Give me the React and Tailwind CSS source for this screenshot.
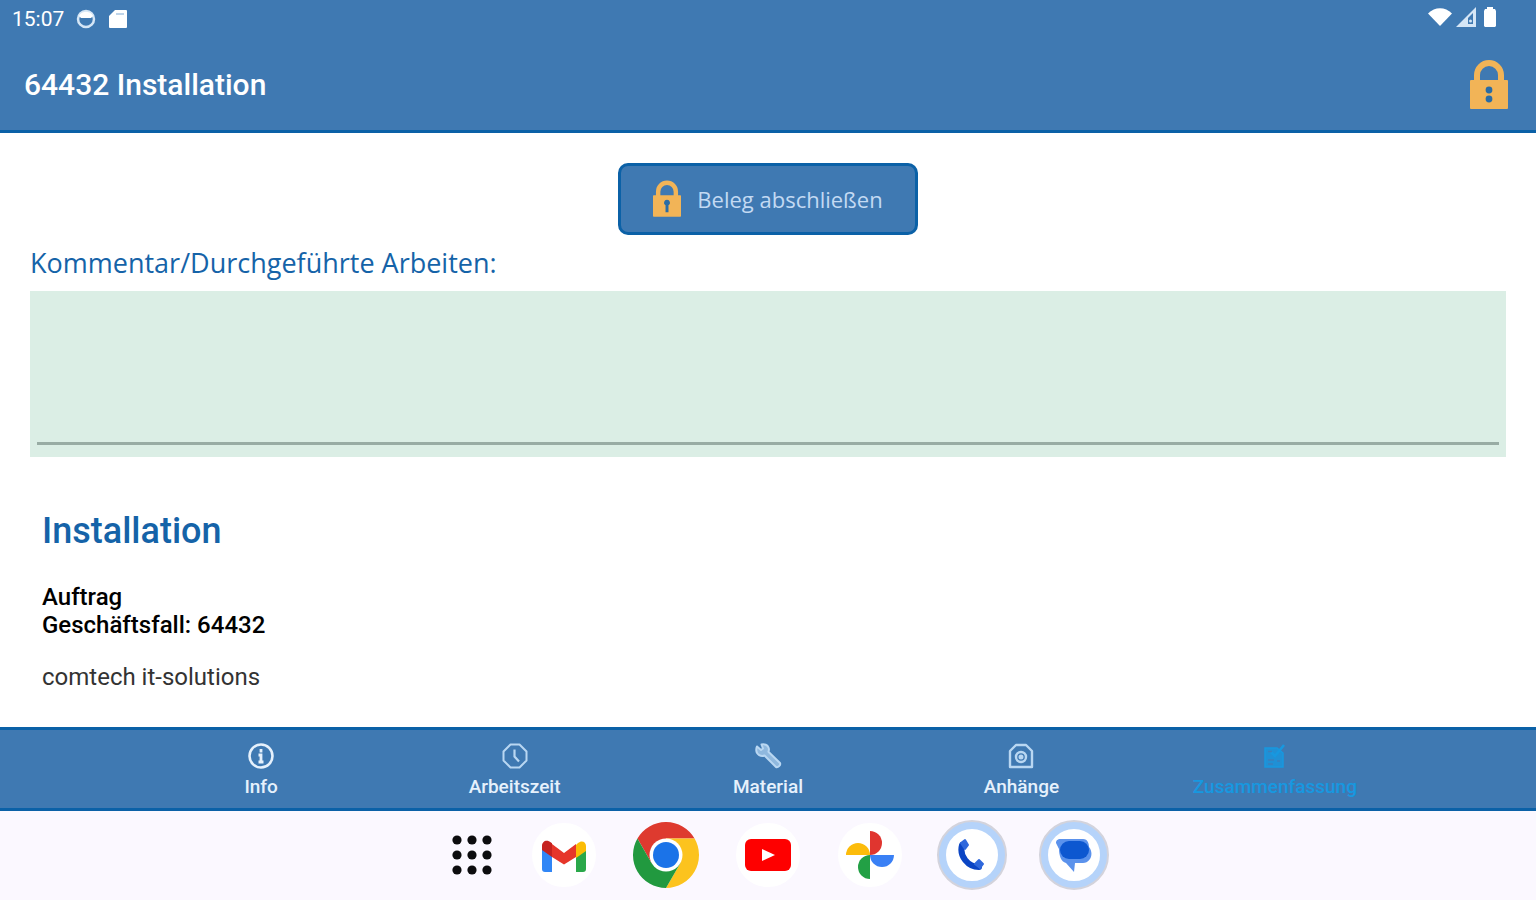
const LockIcon = ({ className, keyhole = 'dots' }) => (
  <svg viewBox="0 0 38 50" className={className} aria-hidden="true">
    <path d="M7 24V15a12 12 0 0 1 24 0v9" fill="none" stroke="#f2b457" strokeWidth="6" />
    <rect x="0" y="20" width="38" height="29" rx="1" fill="#f2b457" />
    {keyhole === 'dots' ? (
      <g fill="#2a6ca5">
        <circle cx="19" cy="30" r="3.4" />
        <circle cx="19" cy="39" r="3.4" />
      </g>
    ) : (
      <path d="M19 26a4 4 0 0 1 2 7.500V43h-4v-9.500A4 4 0 0 1 19 26z" fill="#2a6ca5" />
    )}
  </svg>
);

const InfoIcon = () => (
  <svg viewBox="0 0 28 28" className="h-7 w-7" fill="none" stroke="#e6f1fc" aria-hidden="true">
    <circle cx="14" cy="14" r="11.500" strokeWidth="2.600" />
    <path d="M14 7v3.500M11.500 13H14v7M11.500 20h5" strokeWidth="2.800" />
  </svg>
);

const ClockIcon = () => (
  <svg viewBox="0 0 28 28" className="h-7 w-7" fill="none" stroke="#b9d7f2" aria-hidden="true">
    <path d="M9.500 2.500h9l7 7v9l-7 7h-9l-7-7v-9z" strokeWidth="2" strokeLinejoin="round" />
    <path d="M13.500 7.500v7l4.500 5" strokeWidth="2.200" />
  </svg>
);

const WrenchIcon = () => (
  <svg viewBox="0 0 28 28" className="h-7 w-7" fill="none" stroke="#b9d7f2" aria-hidden="true">
    <path d="M3 4.500L7 8l2-1.500L7.500 2.500c3-.8 6 .5 7 3 .6 1.500.5 3-.1 4.300L26 21c1 2-2 5-4 4L10.500 13.500C7 15 2.500 12.500 2.300 8.500 2.200 7 2.400 5.700 3 4.500z" strokeWidth="2" fill="#8fb8de" strokeLinejoin="round" />
  </svg>
);

const CameraIcon = () => (
  <svg viewBox="0 0 28 28" className="h-7 w-7" fill="none" stroke="#b9d7f2" strokeWidth="2.400" aria-hidden="true">
    <path d="M3 25V9l6-6h10l6 6v16z" strokeLinejoin="round" />
    <circle cx="14" cy="15" r="5" />
    <circle cx="14" cy="15" r="1.300" />
  </svg>
);

const SummaryIcon = () => (
  <svg viewBox="0 0 28 28" className="h-7 w-7" fill="none" stroke="#1798e0" aria-hidden="true">
    <path d="M4 6h12l6 5v14H4z" fill="#1798e0" fillOpacity=".75" strokeWidth="1.500" />
    <path d="M10 10l4 4L23 3" strokeWidth="2.600" />
    <path d="M7 9.500h4M7 18h6M16 19h3M7 22h5" stroke="#3a7fbd" strokeWidth="1.300" />
  </svg>
);

const GmailIcon = () => (
  <svg viewBox="0 0 44 34" className="h-[34px] w-11" aria-hidden="true">
    <path d="M0 10l10 7v17H3a3 3 0 0 1-3-3z" fill="#3186f6" />
    <path d="M34 17l10-7v21a3 3 0 0 1-3 3h-7z" fill="#2aa84a" />
    <path d="M34 7l2-2c4-3.500 8-.8 8 3v5l-10 7z" fill="#fbbc05" />
    <path d="M10 6l12 9 12-9v13l-12 7.500L10 19z" fill="#e6352a" />
    <path d="M0 8c0-5 5-7 9-3.500l1 .8V19L0 12z" fill="#c5221f" />
  </svg>
);

const ChromeIcon = () => (
  <svg viewBox="0 0 66 66" className="h-[66px] w-[66px]" aria-hidden="true">
    <path d="M4.420 16.500A33 33 0 0 1 61.580 16.500H33v16.500L18.700 41.250z" fill="#de3a2f" />
    <path d="M61.580 16.500A33 33 0 0 1 33 66l14.300-24.750L33 33V16.500z" fill="#fcc31e" />
    <path d="M33 66A33 33 0 0 1 4.420 16.500L18.700 41.250 33 33l14.300 8.250z" fill="#21993f" />
    <circle cx="33" cy="33" r="16.500" fill="#fff" />
    <circle cx="33" cy="33" r="13" fill="#1b73e8" />
  </svg>
);

const YoutubeIcon = () => (
  <svg viewBox="0 0 46 32" className="h-8 w-[46px]" aria-hidden="true">
    <rect width="46" height="32" rx="6" fill="#fe0000" />
    <path d="M17 10l13 6-13 6z" fill="#fff" />
  </svg>
);

const PhotosIcon = () => (
  <svg viewBox="0 0 48 48" className="h-12 w-12" aria-hidden="true">
    <path d="M24 0a12 12 0 0 1 0 24z" fill="#e0352f" />
    <path d="M48 24a12 12 0 0 1-24 0z" fill="#3a80f5" />
    <path d="M24 48a12 12 0 0 1 0-24z" fill="#22a045" />
    <path d="M0 24a12 12 0 0 1 24 0z" fill="#fcbc0b" />
  </svg>
);

const PhoneIcon = () => (
  <svg viewBox="0 0 30 34" className="h-[34px] w-[30px]" fill="none" aria-hidden="true">
    <path d="M5 7C2 18 11 29 22 29" stroke="#0b45c4" strokeWidth="6" strokeLinecap="round" />
    <path d="M4 5l4-3 3 5-3 4zM18 26l4-4 4 4-3 4z" fill="#2f68dc" stroke="#2f68dc" strokeWidth="2" strokeLinejoin="round" />
  </svg>
);

const MessagesIcon = () => (
  <svg viewBox="0 0 36 34" className="h-[34px] w-9 shrink-0" aria-hidden="true">
    <path d="M5 1h22c5 0 6 5 6 8 5 6 2 16-6 16h-8l-1 9-8-9C5 24 3 17 3 11L0 5c0-2 1-4 5-4z" fill="#5b92ec" />
    <rect x="4" y="3" width="29" height="18" rx="9" fill="#0d57d0" />
  </svg>
);

const tabs = [
  { label: 'Info', icon: <InfoIcon /> },
  { label: 'Arbeitszeit', icon: <ClockIcon /> },
  { label: 'Material', icon: <WrenchIcon /> },
  { label: 'Anhänge', icon: <CameraIcon /> },
  { label: 'Zusammenfassung', icon: <SummaryIcon />, active: true },
];

const apps = [
  { name: 'Gmail', icon: <GmailIcon />, ring: 'border-2 border-[#fbf8ff] bg-white' },
  { name: 'Chrome', icon: <ChromeIcon />, ring: '' },
  { name: 'YouTube', icon: <YoutubeIcon />, ring: 'border-2 border-[#fbf8ff] bg-white' },
  { name: 'Fotos', icon: <PhotosIcon />, ring: 'border-2 border-[#fbf8ff] bg-white' },
  { name: 'Telefon', icon: <PhoneIcon />, ring: 'border-8 border-[#b5d3fa] bg-white outline-2 -outline-offset-1 outline-[#d3d3dc]' },
  { name: 'Messages', icon: <MessagesIcon />, ring: 'border-8 border-[#b5d3fa] bg-white outline-2 -outline-offset-1 outline-[#d3d3dc]' },
];

const StatusBar = () => (
  <div className="flex h-[38px] items-center justify-between pr-9 pl-3 text-white">
    <div className="flex items-center gap-3">
      <span className="text-[21px] leading-8">15:07</span>
      <svg viewBox="0 0 20 20" className="h-5 w-5" aria-hidden="true">
        <circle cx="10" cy="10" r="8" fill="none" stroke="#d5e6f6" strokeWidth="2.500" />
        <path d="M3 7a8 8 0 0 1 14 0l-2 2H5z" fill="#fff" />
      </svg>
      <svg viewBox="0 0 20 20" className="h-5 w-5" aria-hidden="true">
        <path d="M7 1h11a1 1 0 0 1 1 1v16a1 1 0 0 1-1 1H2a1 1 0 0 1-1-1V7z" fill="#fff" />
        <path d="M8 5h8" stroke="#a9c6e2" strokeWidth="1.500" />
      </svg>
    </div>
    <div className="flex items-center gap-1 pb-1">
      <svg viewBox="0 0 24 20" className="h-5 w-6" aria-hidden="true">
        <path d="M0 6.500C7-.5 17-.5 24 6.500L12 19z" fill="#fff" />
      </svg>
      <svg viewBox="0 0 20 20" className="h-5 w-5" aria-hidden="true">
        <path d="M20 0v20H0z" fill="#d5e6f6" />
        <path d="M12 11l5-5v11h-5z" fill="#3f79b2" />
        <circle cx="14.500" cy="14" r="1.500" fill="#d5e6f6" />
      </svg>
      <svg viewBox="0 0 20 22" className="h-[22px] w-5" aria-hidden="true">
        <path d="M7 1h6v2h2l1 2v15l-1 1H5l-1-1V5l1-2h2z" fill="#fff" />
      </svg>
    </div>
  </div>
);

const BottomNav = () => (
  <nav className="border-y-3 border-[#0b61a7] bg-[#3f79b2]">
    <div className="mx-auto grid w-[82.5%] grid-cols-5">
      {tabs.map((tab) => (
        <button
          key={tab.label}
          type="button"
          className={`flex flex-col items-center gap-1 pt-3 pb-2 text-[19px] leading-[26px] font-medium ${
            tab.active ? 'text-[#1798e0]' : 'text-[#e6f1fc]'
          }`}
        >
          {tab.icon}
          <span>{tab.label}</span>
        </button>
      ))}
    </div>
  </nav>
);

const Dock = () => (
  <div className="flex items-center justify-center gap-[34px] bg-[#fbf8ff] pt-[10px] pb-[11px] pl-6">
    <button type="button" aria-label="Alle Apps" className="mr-1">
      <svg viewBox="0 0 40 40" className="h-10 w-10" fill="#0c0c0e" aria-hidden="true">
        {[5, 20, 35].map((y) => [5, 20, 35].map((x) => <circle key={`${x}-${y}`} cx={x} cy={y} r="4.600" />))}
      </svg>
    </button>
    {apps.map((app) => (
      <button
        key={app.name}
        type="button"
        aria-label={app.name}
        className={`flex h-[68px] w-[68px] items-center justify-center rounded-full ${app.ring}`}
      >
        {app.icon}
      </button>
    ))}
  </div>
);

export default function App() {
  return (
    <div className="flex min-h-screen flex-col bg-white font-['Roboto',sans-serif]">
      <header className="border-b-3 border-[#0b61a7] bg-[#3f79b2]">
        <StatusBar />
        <div className="flex items-center justify-between pt-[22px] pr-7 pb-5 pl-6">
          <h1 className="text-[30px] leading-9 font-medium text-white">64432 Installation</h1>
          <button type="button" aria-label="Gesperrt">
            <LockIcon className="h-[50px] w-[38px]" />
          </button>
        </div>
      </header>

      <main className="flex flex-1 flex-col px-[30px] pt-[30px]">
        <button
          type="button"
          className="mx-auto flex h-[72px] w-[300px] items-center justify-center gap-4 rounded-[10px] border-3 border-[#0b61a7] bg-[#3f79b2] font-['Open_Sans',sans-serif] text-[22px] text-[#c3daf3]"
        >
          <LockIcon className="h-[38px] w-7" keyhole="slot" />
          Beleg abschließen
        </button>

        <label
          htmlFor="comment"
          className="mt-[10px] font-['Open_Sans',sans-serif] text-[27px] leading-9 text-[#1563a8]"
        >
          Kommentar/Durchgeführte Arbeiten:
        </label>
        <div className="mt-[10px] bg-[#dbeee5] px-[7px] pb-3">
          <textarea
            id="comment"
            className="block h-[154px] w-full resize-none border-b-3 border-[#98aca4] bg-transparent p-2 text-2xl outline-none"
          />
        </div>

        <section className="px-3 pt-[52px] text-2xl leading-7 text-black">
          <h2 className="text-[36px] leading-11 font-medium text-[#1563a8]">Installation</h2>
          <p className="mt-[30px] font-medium">
            Auftrag
            <br />
            Geschäftsfall: 64432
          </p>
          <p className="mt-6 text-[#333]">comtech it-solutions</p>
        </section>
      </main>

      <BottomNav />
      <Dock />
    </div>
  );
}
